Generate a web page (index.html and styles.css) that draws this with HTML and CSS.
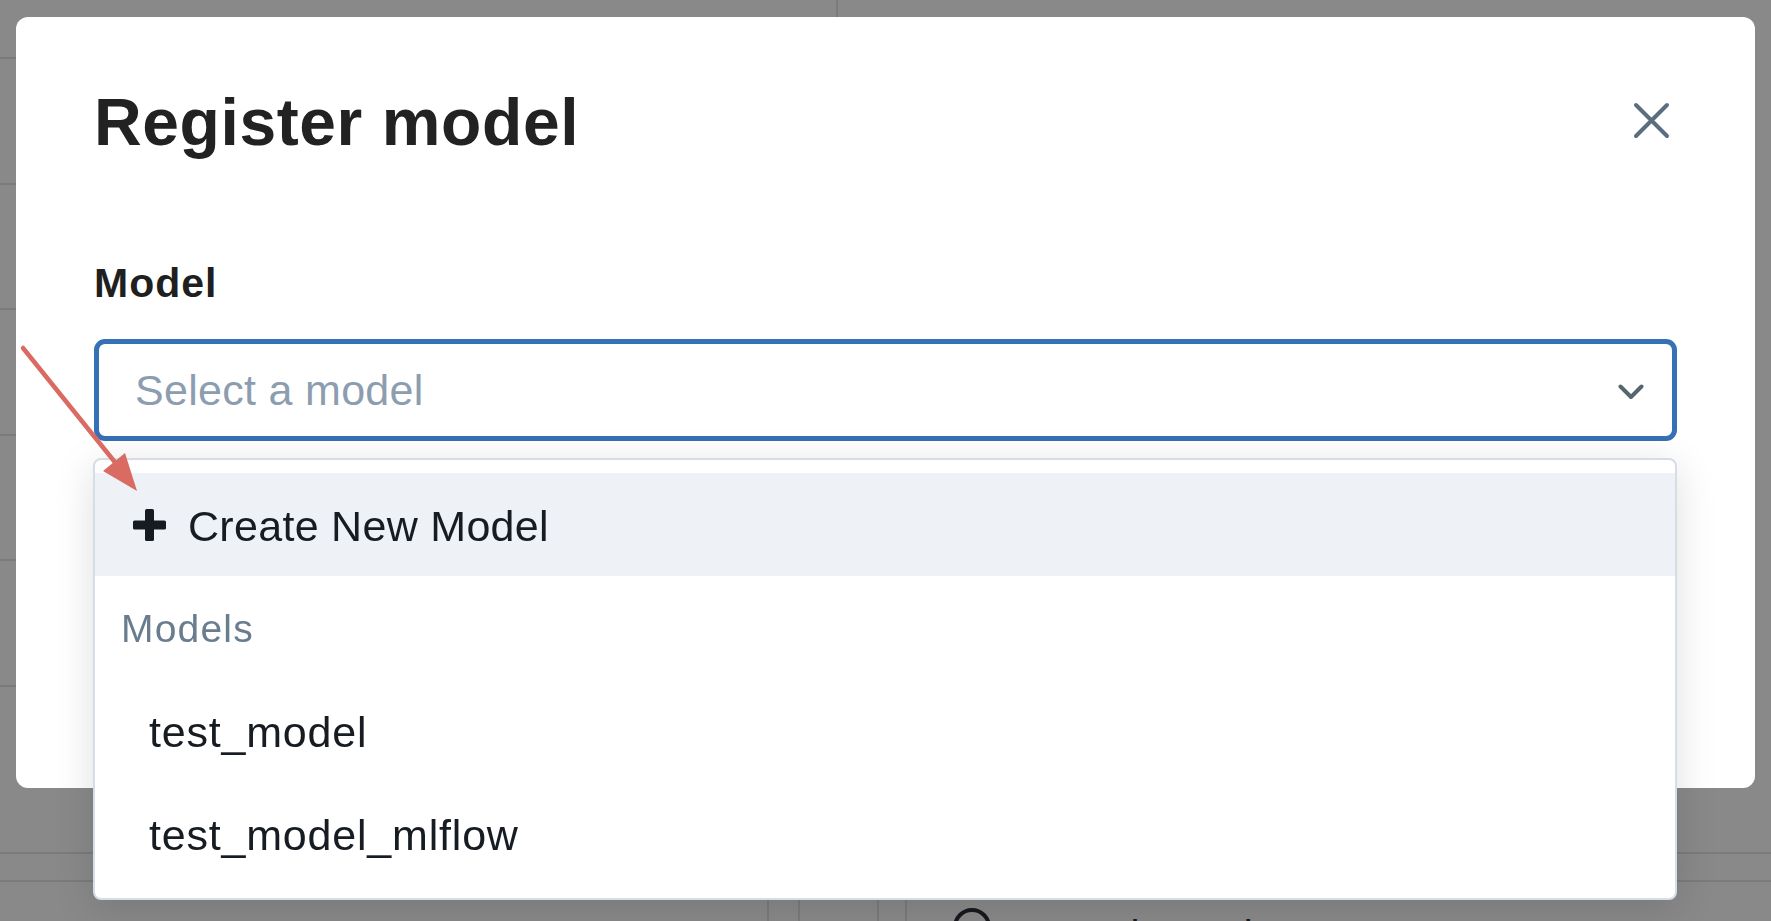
FILE: index.html
```html
<!DOCTYPE html>
<html lang="en">
<head>
<meta charset="utf-8">
<title>Register model</title>
<link rel="stylesheet" href="styles.css">
</head>
<body>
<div class="page">
  <div class="page-main">
    <aside class="page-side">
      <div class="side-row"></div>
      <div class="side-row"></div>
      <div class="side-row"></div>
      <div class="side-row"></div>
      <div class="side-row"></div>
      <div class="side-row"></div>
    </aside>
    <div class="page-content"></div>
  </div>
  <div class="page-strip"></div>
  <div class="page-footer">
    <div class="foot-cell foot-a"></div>
    <div class="foot-cell foot-b"></div>
    <div class="foot-cell foot-c"></div>
    <div class="foot-search">
      <svg class="search-icon" viewBox="0 0 44 44" width="44" height="44"><circle cx="20" cy="20" r="17" fill="none" stroke="#2b3035" stroke-width="4"/></svg>
      <span class="search-text">Search metrics</span>
    </div>
  </div>
</div>

<div class="overlay"></div>

<div class="modal">
  <div class="modal-header">
    <h1 class="modal-title">Register model</h1>
    <button class="close-btn" aria-label="Close">
      <svg viewBox="0 0 37 37" width="37" height="37"><path d="M3 3 L34 34 M34 3 L3 34" stroke="#5b6e7f" stroke-width="4" stroke-linecap="round" fill="none"/></svg>
    </button>
  </div>
  <label class="field-label">Model</label>
  <div class="field">
    <div class="select">
      <span class="placeholder">Select a model</span>
      <svg class="chevron" viewBox="0 0 26 16" width="26" height="16"><path d="M2.5 2.5 L13 13 L23.5 2.5" stroke="#56666f" stroke-width="4" stroke-linecap="round" stroke-linejoin="round" fill="none"/></svg>
    </div>
    <div class="menu">
      <div class="menu-item create">
        <svg class="plus" viewBox="0 0 33 32" width="33" height="32"><rect x="12" y="0" width="9" height="32" rx="1.6" fill="#161b21"/><rect x="0" y="11.5" width="33" height="9" rx="1.6" fill="#161b21"/></svg>
        <span>Create New Model</span>
      </div>
      <div class="menu-group">Models</div>
      <div class="menu-item option">test_model</div>
      <div class="menu-item option">test_model_mlflow</div>
    </div>
  </div>
</div>

<svg class="annotation" width="160" height="520" viewBox="0 0 160 520">
  <line x1="23" y1="348" x2="118" y2="466" stroke="#d96b63" stroke-width="4.5" stroke-linecap="round"/>
  <polygon points="137,491 103,471 125,453" fill="#d96b63"/>
</svg>
</body>
</html>
```

FILE: styles.css
```css
* { box-sizing: border-box; }

html, body {
  margin: 0;
  padding: 0;
  width: 1771px;
  height: 921px;
  overflow: hidden;
  font-family: "Liberation Sans", Arial, sans-serif;
  background: #ffffff;
}

/* underlying page (dimmed by overlay) */
.page {
  width: 1771px;
  height: 921px;
  display: flex;
  flex-direction: column;
  overflow: hidden;
}

.page-main {
  height: 852px;
  flex-shrink: 0;
  display: grid;
  grid-template-columns: 836px 1fr;
}

.page-side {
  padding-top: 57px;
  width: 300px;
}

.side-row {
  height: 125.6px;
  border-top: 2px solid #e2e5e9;
}

.page-content {
  border-left: 2px solid #e2e5e9;
}

.page-strip {
  height: 30px;
  flex-shrink: 0;
  border-top: 2px solid #e2e5e9;
  border-bottom: 2px solid #e2e5e9;
}

.page-footer {
  flex: 1;
  min-height: 0;
  display: flex;
  align-items: stretch;
  padding-left: 767px;
}

.foot-cell {
  border-left: 2px solid #e2e5e9;
}
.foot-a { width: 31px; }
.foot-b { width: 79px; }
.foot-c { width: 28px; }

.foot-search {
  display: flex;
  align-items: flex-start;
  gap: 30px;
  padding-top: 25px;
  border-left: 2px solid #e2e5e9;
  padding-left: 45px;
}

.search-icon { display: block; flex-shrink: 0; }

.search-text {
  font-size: 40px;
  color: #2b3035;
  line-height: 1;
  padding-top: 8px;
  white-space: nowrap;
}

.overlay {
  position: fixed;
  inset: 0;
  background: rgba(0, 0, 0, 0.462);
}

/* modal */
.modal {
  position: absolute;
  left: 16px;
  top: 17px;
  width: 1739px;
  height: 771px;
  background: #ffffff;
  border-radius: 12px;
  padding: 67px 78px 0 78px;
}

.modal-header {
  display: flex;
  justify-content: space-between;
  align-items: center;
}

.modal-title {
  margin: 0;
  font-size: 66px;
  line-height: 76px;
  font-weight: 700;
  color: #222222;
  letter-spacing: 0.6px;
}

.close-btn {
  width: 52px;
  height: 52px;
  margin-top: -4px;
  padding: 0;
  border: 0;
  background: transparent;
  display: flex;
  align-items: center;
  justify-content: center;
}

.field-label {
  display: block;
  margin-top: 100px;
  font-size: 41px;
  line-height: 46px;
  font-weight: 700;
  color: #1f1f1f;
  letter-spacing: 1px;
}

.field {
  position: relative;
  margin-top: 33px;
}

.select {
  height: 102px;
  border: 5px solid #3670b5;
  border-radius: 11px;
  display: flex;
  align-items: center;
  justify-content: space-between;
  padding: 0 28px 0 36px;
}

.placeholder {
  font-size: 43px;
  color: #8c9db0;
  letter-spacing: 0.3px;
}

.chevron { display: block; margin-top: 4px; }

/* dropdown menu */
.menu {
  position: absolute;
  left: -1px;
  right: 0;
  top: calc(100% + 17px);
  background: #ffffff;
  border: 2px solid #d6dde5;
  border-radius: 8px;
  padding: 13px 0;
  box-shadow: 0 8px 40px rgba(0, 0, 0, 0.13);
}

.menu-item {
  height: 103px;
  display: flex;
  align-items: center;
  font-size: 43px;
  color: #161c22;
  padding-top: 3px;
}

.menu-item.create {
  background: #eef2f7;
  padding-left: 38px;
  gap: 22px;
  letter-spacing: 0.3px;
}

.plus { display: block; margin-top: -3px; }

.menu-group {
  height: 103px;
  display: flex;
  align-items: center;
  padding-left: 26px;
  font-size: 39px;
  color: #6a7d8f;
  padding-top: 2px;
  letter-spacing: 1.2px;
}

.menu-item.option {
  padding-left: 54px;
  letter-spacing: 0.8px;
}

.annotation {
  position: absolute;
  left: 0;
  top: 0;
  pointer-events: none;
}
```
